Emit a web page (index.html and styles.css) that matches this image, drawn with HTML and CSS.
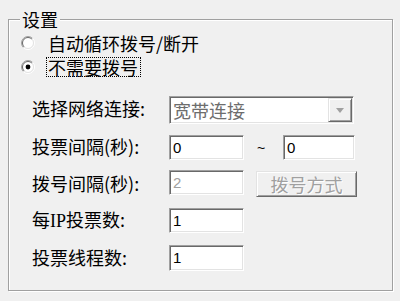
FILE: index.html
```html
<!DOCTYPE html>
<html lang="zh-CN">
<head>
<meta charset="utf-8">
<title>设置</title>
<link rel="stylesheet" href="styles.css">
</head>
<body>
<fieldset class="group">
  <legend class="group-title">设置</legend>
  <div class="radio-row">
    <svg class="radio" width="14" height="14" viewBox="0 0 14 14">
      <circle cx="7" cy="7" r="5.5" fill="#fff"/>
      <path d="M2.4 11.6 A6.5 6.5 0 0 1 11.6 2.4" fill="none" stroke="#a0a0a0"/>
      <path d="M2.4 11.6 A6.5 6.5 0 0 0 11.6 2.4" fill="none" stroke="#ffffff"/>
      <path d="M3.1 10.9 A5.5 5.5 0 0 1 10.9 3.1" fill="none" stroke="#696969"/>
      <path d="M3.1 10.9 A5.5 5.5 0 0 0 10.9 3.1" fill="none" stroke="#e3e3e3"/>
    </svg>
    <span class="radio-label">自动循环拨号/断开</span>
  </div>
  <div class="radio-row">
    <svg class="radio" width="14" height="14" viewBox="0 0 14 14">
      <circle cx="7" cy="7" r="5.5" fill="#fff"/>
      <path d="M2.4 11.6 A6.5 6.5 0 0 1 11.6 2.4" fill="none" stroke="#a0a0a0"/>
      <path d="M2.4 11.6 A6.5 6.5 0 0 0 11.6 2.4" fill="none" stroke="#ffffff"/>
      <path d="M3.1 10.9 A5.5 5.5 0 0 1 10.9 3.1" fill="none" stroke="#696969"/>
      <path d="M3.1 10.9 A5.5 5.5 0 0 0 10.9 3.1" fill="none" stroke="#e3e3e3"/>
      <circle cx="7" cy="7" r="2.4" fill="#000"/>
    </svg>
    <span class="radio-label focused">不需要拨号</span>
  </div>

  <div class="form-row row-combo">
    <span class="label">选择网络连接:</span>
    <div class="combo">
      <span class="combo-text">宽带连接</span>
      <span class="combo-btn"><span class="arrow"></span></span>
    </div>
  </div>
  <div class="form-row row-interval">
    <span class="label">投票间隔(秒):</span>
    <div class="edit w-main">0</div>
    <span class="tilde">~</span>
    <div class="edit w-second">0</div>
  </div>
  <div class="form-row row-dial">
    <span class="label">拨号间隔(秒):</span>
    <div class="edit w-main disabled">2</div>
    <div class="button disabled">拨号方式</div>
  </div>
  <div class="form-row row-ip">
    <span class="label">每<span class="latin">IP</span>投票数:</span>
    <div class="edit w-main">1</div>
  </div>
  <div class="form-row row-threads">
    <span class="label">投票线程数:</span>
    <div class="edit w-main tall">1</div>
  </div>
</fieldset>
</body>
</html>
```

FILE: styles.css
```css
html, body {
  margin: 0;
  padding: 0;
  background: #f0f0f0;
}

body {
  width: 400px;
  height: 301px;
  overflow: hidden;
  font-family: "Noto Sans CJK SC", "Noto Sans", sans-serif;
  font-size: 18px;
  color: #000;
}

.group {
  box-sizing: border-box;
  width: 385px;
  margin: 9px 0 0 8px;
  padding: 2px 0 19px 11px;
  border: 1px solid #a0a0a0;
  box-shadow: inset 1px 1px 0 #fff, 1px 1px 0 #fff;
  min-width: 0;
}

.group-title {
  padding: 0 2px;
  line-height: 20px;
  height: 20px;
  background: #f0f0f0;
}

.radio-row {
  display: flex;
  align-items: center;
  height: 24px;
  margin-left: 1px;
}

.radio {
  display: block;
  flex: none;
}

.radio-label {
  margin-left: 11px;
  padding: 0 2px 0 1px;
  line-height: 18px;
  border: 1px dotted transparent;
  white-space: nowrap;
}

.radio-label.focused {
  border-color: #000;
}

.form-row {
  display: flex;
  align-items: center;
  margin-left: 12px;
}

.row-combo { margin-top: 17px; height: 28px; }
.row-interval { margin-top: 11px; height: 25px; }
.row-dial { margin-top: 10px; height: 27px; align-items: flex-start; }
.row-ip { margin-top: 11px; height: 25px; }
.row-threads { margin-top: 12px; height: 26px; }

.label {
  width: 137px;
  flex: none;
  line-height: 20px;
  white-space: nowrap;
  position: relative;
  top: -2px;
}

.row-dial .label {
  margin-top: 4px;
  top: -1px;
}

.row-ip .label,
.row-threads .label {
  top: -1px;
}

.latin {
  font-family: "Liberation Serif", serif;
}

.edit,
.combo {
  box-sizing: border-box;
  background: #fff;
  border: 1px solid;
  border-color: #a0a0a0 #fff #fff #a0a0a0;
  box-shadow: inset 1px 1px 0 #696969, inset -1px -1px 0 #e3e3e3;
}

.edit {
  height: 25px;
  padding: 0 0 0 3px;
  font-family: "Liberation Sans", Arial, sans-serif;
  font-size: 15px;
  line-height: 23px;
}

.edit.tall { height: 26px; line-height: 24px; }

.edit.w-main { width: 75px; }
.edit.w-second { width: 72px; }

.edit.disabled { color: #a0a0a0; }

.tilde {
  width: 39px;
  box-sizing: border-box;
  padding-left: 13px;
  font-family: "Liberation Sans", Arial, sans-serif;
  font-size: 14px;
  flex: none;
}

.combo {
  width: 185px;
  height: 28px;
  display: flex;
  align-items: stretch;
  padding: 1px;
}

.combo-text {
  flex: 1;
  padding-left: 2px;
  line-height: 24px;
  color: #6d6d6d;
}

.combo-btn,
.button {
  box-sizing: border-box;
  background: #f0f0f0;
  border: 1px solid;
  border-color: #e3e3e3 #696969 #696969 #e3e3e3;
  box-shadow: inset 1px 1px 0 #fff, inset -1px -1px 0 #a0a0a0;
}

.combo-btn {
  width: 24px;
  display: flex;
  align-items: center;
  justify-content: center;
}

.arrow {
  width: 0;
  height: 0;
  border-left: 4px solid transparent;
  border-right: 4px solid transparent;
  border-top: 5px solid #a0a0a0;
  margin-top: 1px;
}

.button {
  width: 101px;
  height: 26px;
  margin-left: 12px;
  margin-top: 1px;
  text-align: center;
  line-height: 24px;
}

.button.disabled {
  color: #a0a0a0;
  text-shadow: 1px 1px 0 #fff;
}
```
